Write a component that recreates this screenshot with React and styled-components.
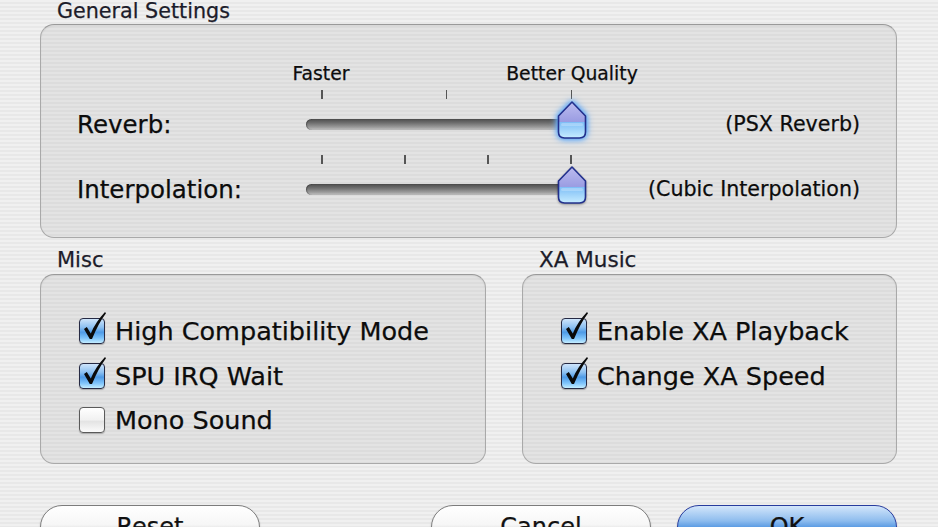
import React from "react";
import styled, { createGlobalStyle } from "styled-components";

const GlobalStyle = createGlobalStyle`
  html, body {
    margin: 0;
    padding: 0;
    height: 527px;
    overflow: hidden;
  }
  body {
    font-family: "DejaVu Sans", "Liberation Sans", sans-serif;
    color: #0c0c0c;
    -webkit-text-stroke: 0.25px currentColor;
    background: repeating-linear-gradient(
      180deg,
      #f0f0f0 0px,
      #f0f0f0 2px,
      #e8e8e8 2px,
      #e8e8e8 4px
    );
  }
`;

const Page = styled.div`
  width: 857px;
  padding: 0 41px 0 40px;
  display: flex;
  flex-direction: column;
`;

const Group = styled.section`
  display: flex;
  flex-direction: column;
  width: ${(p) => p.width || "auto"};
`;

const Legend = styled.div`
  font-size: ${(p) => p.size || 21}px;
  line-height: 22px;
  height: 22px;
  padding-left: 17px;
  margin-bottom: ${(p) => p.gap || 2}px;
  color: #1c1c2a;
  white-space: nowrap;
`;

const Box = styled.div`
  box-sizing: border-box;
  border: 1.5px solid #a9a9a9;
  border-top-color: #9a9a9a;
  border-radius: 14px;
  background: rgba(0, 0, 0, 0.05);
  box-shadow: inset 0 1px 2px rgba(0, 0, 0, 0.06);
  height: ${(p) => p.height}px;
  padding: ${(p) => p.pad};
`;

const SliderGrid = styled.div`
  display: grid;
  grid-template-columns: 229px 285px 1fr;
  row-gap: 6px;
`;

const RowLabel = styled.div`
  align-self: end;
  height: 50px;
  display: flex;
  align-items: center;
  font-size: 24.5px;
  white-space: nowrap;
`;

const Caption = styled.div`
  align-self: end;
  height: 50px;
  display: flex;
  align-items: center;
  justify-content: flex-end;
  font-size: 20.6px;
  white-space: nowrap;
`;

const SliderBox = styled.div`
  display: flex;
  flex-direction: column;
`;

const ScaleLabels = styled.div`
  display: flex;
  justify-content: space-between;
  margin: 0 19px 6px 15px;
  height: 20px;
`;

const ScaleLabel = styled.div`
  width: 0;
  display: flex;
  justify-content: center;
  font-size: 18.8px;
  line-height: 20px;
  white-space: nowrap;
`;

const Ticks = styled.div`
  display: flex;
  justify-content: space-between;
  margin: 0 19px 0 15px;
  height: 9px;
`;

const Tick = styled.span`
  width: 1.5px;
  height: 9px;
  background: #555;
`;

const Lane = styled.div`
  position: relative;
  height: 50px;
  display: flex;
  align-items: center;
`;

const Track = styled.div`
  width: 270px;
  height: 11px;
  border-radius: 6px;
  background: linear-gradient(180deg, #4e4e4e 0%, #6e6e6e 35%, #9c9c9c 75%, #c4c4c4 100%);
  box-shadow: inset 1px 0 1px rgba(0, 0, 0, 0.35);
`;

const Knob = styled.svg`
  position: absolute;
  top: 2px;
  left: ${(p) => p.pos - 15}px;
  width: 30px;
  height: 38px;
  overflow: visible;
  filter: ${(p) =>
    p.focused
      ? "drop-shadow(0 0 3px #5aa2f2) drop-shadow(0 0 2px #7ab8f8)"
      : "drop-shadow(0 1px 1px rgba(0,0,0,0.35))"};
`;

function Thumb({ pos, focused, id }) {
  return (
    <Knob pos={pos} focused={focused} viewBox="0 0 30 38">
      <defs>
        <linearGradient id={`top${id}`} x1="0" y1="0" x2="0" y2="1">
          <stop offset="0" stopColor="#bcbcef" />
          <stop offset="1" stopColor="#9a9ce2" />
        </linearGradient>
        <linearGradient id={`bot${id}`} x1="0" y1="0" x2="0" y2="1">
          <stop offset="0" stopColor="#3a8ae4" />
          <stop offset="0.45" stopColor="#6cb2f4" />
          <stop offset="1" stopColor="#c6ecff" />
        </linearGradient>
      </defs>
      <path
        d="M15 1 L28.5 15 L28.5 31 Q28.5 37 22.5 37 L7.5 37 Q1.5 37 1.5 31 L1.5 15 Z"
        fill={`url(#bot${id})`}
      />
      <path d="M15 1 L28.5 15 L28.5 21 L1.5 21 L1.5 15 Z" fill={`url(#top${id})`} />
      <path
        d="M15 1 L28.5 15 L28.5 31 Q28.5 37 22.5 37 L7.5 37 Q1.5 37 1.5 31 L1.5 15 Z"
        fill="none"
        stroke="#22308c"
        strokeWidth="1.6"
        strokeLinejoin="round"
      />
      <rect x="4" y="22" width="22" height="3" rx="1.5" fill="#ffffff" opacity="0.25" />
    </Knob>
  );
}

function Slider({ labels, ticks, focused, id }) {
  return (
    <SliderBox>
      {labels && (
        <ScaleLabels>
          {labels.map((l) => (
            <ScaleLabel key={l}>{l}</ScaleLabel>
          ))}
        </ScaleLabels>
      )}
      <Ticks>
        {Array.from({ length: ticks }).map((_, i) => (
          <Tick key={i} />
        ))}
      </Ticks>
      <Lane>
        <Track />
        <Thumb pos={266} focused={focused} id={id} />
      </Lane>
    </SliderBox>
  );
}

const BottomRow = styled.div`
  display: flex;
  gap: 36px;
  margin-top: 11px;
`;

const CheckList = styled.div`
  display: flex;
  flex-direction: column;
`;

const CheckRow = styled.label`
  display: flex;
  align-items: center;
  gap: 10px;
  height: 44.5px;
  font-size: 25.5px;
  white-space: nowrap;
`;

const CheckWrap = styled.span`
  position: relative;
  width: 26px;
  height: 26px;
  flex: none;
`;

const CheckSquare = styled.span`
  display: block;
  box-sizing: border-box;
  width: 26px;
  height: 26px;
  border-radius: 4px;
  border: 1.5px solid ${(p) => (p.on ? "#262a44" : "#5a5a5a")};
  background: ${(p) =>
    p.on
      ? "linear-gradient(180deg, #cfe5fb 0%, #8cc0f1 35%, #4e9ae6 55%, #7fc4fb 80%, #c3edff 100%)"
      : "linear-gradient(180deg, #ffffff 0%, #f1f1f1 50%, #e3e3e3 55%, #fbfbfb 100%)"};
  box-shadow: 0 1px 1px rgba(0, 0, 0, 0.25);
`;

const CheckMark = styled.svg`
  position: absolute;
  left: 0;
  top: -7px;
  width: 30px;
  height: 32px;
  overflow: visible;
`;

function Checkbox({ checked, children }) {
  return (
    <CheckRow>
      <CheckWrap>
        <CheckSquare on={checked} />
        {checked && (
          <CheckMark viewBox="0 0 30 32">
            <path
              d="M5 18 L7.8 16 L11.8 22.5 Q16.5 11 26 1 L27 2.2 Q19.5 12 13 28 L10.8 28 Z"
              fill="#0a0a0a"
            />
          </CheckMark>
        )}
      </CheckWrap>
      {children}
    </CheckRow>
  );
}

const Buttons = styled.div`
  display: flex;
  margin-top: 41px;
`;

const Spacer = styled.div`
  flex: 1;
`;

const AquaButton = styled.button`
  box-sizing: border-box;
  width: 220px;
  height: 44px;
  margin-left: ${(p) => p.ml || 0}px;
  border-radius: 22px;
  font-family: "DejaVu Sans", "Liberation Sans", sans-serif;
  font-size: 24px;
  color: #111;
  -webkit-text-stroke: 0.25px currentColor;
  padding: 0;
  border: 1.5px solid ${(p) => (p.primary ? "#283c9e" : "#7c7c7c")};
  background: ${(p) =>
    p.primary
      ? "linear-gradient(180deg, #d3e6fb 0%, #8fbdee 35%, #5c9ce4 50%, #4c92e2 55%, #9fd3fb 100%)"
      : "linear-gradient(180deg, #ffffff 0%, #f6f6f6 45%, #e6e6e6 52%, #fafafa 100%)"};
  box-shadow: 0 1px 2px rgba(0, 0, 0, 0.2);
`;

export default function App() {
  return (
    <>
      <GlobalStyle />
      <Page>
        <Group>
          <Legend size={20.7}>General Settings</Legend>
          <Box height={214} pad="39px 36px 0 36px">
            <SliderGrid>
              <RowLabel>Reverb:</RowLabel>
              <Slider labels={["Faster", "Better Quality"]} ticks={3} focused id="a" />
              <Caption>(PSX Reverb)</Caption>
              <RowLabel>Interpolation:</RowLabel>
              <Slider ticks={4} id="b" />
              <Caption>(Cubic Interpolation)</Caption>
            </SliderGrid>
          </Box>
        </Group>
        <BottomRow>
          <Group width="446px">
            <Legend gap={3}>Misc</Legend>
            <Box height={190} pad="34px 38px 0 38px">
              <CheckList>
                <Checkbox checked>High Compatibility Mode</Checkbox>
                <Checkbox checked>SPU IRQ Wait</Checkbox>
                <Checkbox>Mono Sound</Checkbox>
              </CheckList>
            </Box>
          </Group>
          <Group width="375px">
            <Legend gap={3} size={21.5}>
              XA Music
            </Legend>
            <Box height={190} pad="34px 38px 0 38px">
              <CheckList>
                <Checkbox checked>Enable XA Playback</Checkbox>
                <Checkbox checked>Change XA Speed</Checkbox>
              </CheckList>
            </Box>
          </Group>
        </BottomRow>
        <Buttons>
          <AquaButton>Reset</AquaButton>
          <Spacer />
          <AquaButton>Cancel</AquaButton>
          <AquaButton primary ml={26}>
            OK
          </AquaButton>
        </Buttons>
      </Page>
    </>
  );
}
